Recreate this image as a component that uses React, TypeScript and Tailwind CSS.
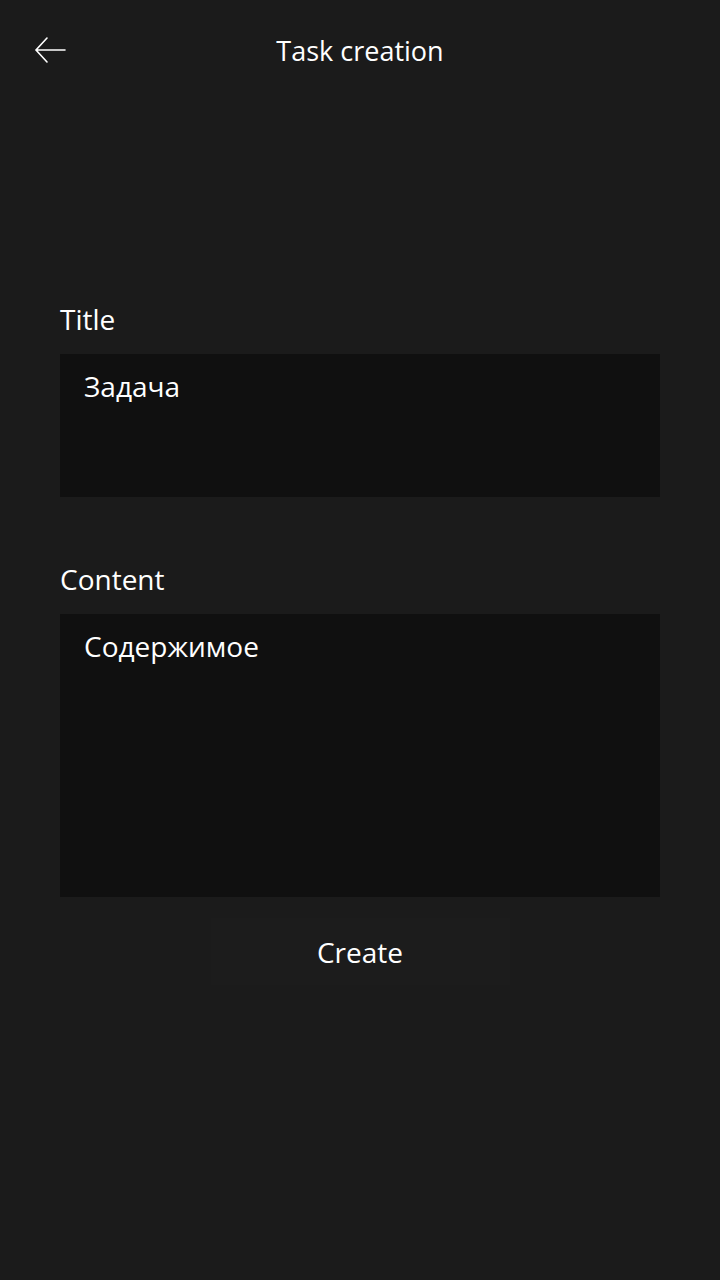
export default function App() {
  const font = { fontFamily: '"Open Sans", "Noto Sans", sans-serif' };
  return (
    <div className="w-[720px] h-[1280px] bg-[#1b1b1b] text-white flex flex-col" style={font}>
      <header className="h-[102px] flex items-center relative">
        <button className="absolute left-[34px] top-[36px] w-[32px] h-[28px] flex items-center justify-center">
          <svg width="32" height="28" viewBox="0 0 32 28" fill="none" stroke="white" strokeWidth="1.6" strokeLinecap="round">
            <path d="M31 14H2M13 2L2 14l11 12" />
          </svg>
        </button>
        <h1 className="w-full text-center text-[27px] font-normal leading-none mb-[2px]">Task creation</h1>
      </header>
      <main className="flex flex-col px-[60px] pt-[203px]">
        <label className="text-[28px] leading-none h-[36px]">Title</label>
        <div className="mt-[13px] h-[143px] bg-[#101010] px-[24px] pt-[15px] text-[28px] leading-[34px]">Задача</div>
        <label className="mt-[68px] text-[28px] leading-none h-[36px]">Content</label>
        <div className="mt-[13px] h-[283px] bg-[#101010] px-[24px] pt-[15px] text-[28px] leading-[34px]">Содержимое</div>
        <div className="flex justify-center mt-[21px]">
          <button className="w-[299px] h-[67px] bg-[#1c1c1c] text-[28px] leading-none flex items-center justify-center">Create</button>
        </div>
      </main>
    </div>
  );
}
